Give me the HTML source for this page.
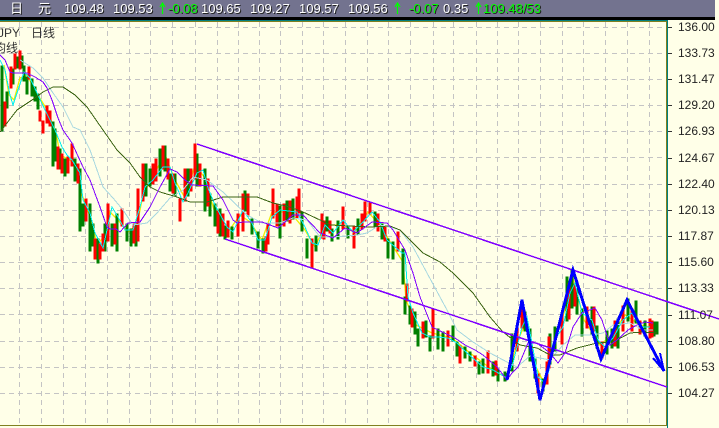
<!DOCTYPE html>
<html><head><meta charset="utf-8"><style>
html,body{margin:0;padding:0;width:719px;height:428px;overflow:hidden;background:#ffffe8}
#w{position:relative;width:719px;height:428px;overflow:hidden;font-family:"Liberation Sans","Noto Sans CJK SC",sans-serif}
svg{position:absolute;left:0;top:0}
.h,.a,.t{position:absolute;white-space:nowrap}
.h{top:1px;font-size:13px;line-height:16px;color:#fff;text-shadow:1px 1px 0 #222}
.g{color:#00ff00}
.a{left:678px;font-size:12px;line-height:14px;color:#222}
.t{font-size:12px;line-height:14px;color:#333}
</style></head><body><div id="w">
<svg width="719" height="428" viewBox="0 0 719 428">
<rect x="0" y="0" width="719" height="428" fill="#ffffe8"/>
<rect x="0" y="0" width="715" height="17" fill="#73738f"/>
<rect x="0" y="17" width="715" height="3" fill="#000"/>
<rect x="0" y="20" width="668" height="1" fill="#008080"/>
<rect x="0" y="21" width="667" height="1" fill="#808020"/>
<path d="M19.5 22V425M41.5 22V425M63.5 22V425M85.5 22V425M107.5 22V425M129.5 22V425M150.5 22V425M172.5 22V425M195.5 22V425M217.5 22V425M238.5 22V425M259.5 22V425M280.5 22V425M302.5 22V425M323.5 22V425M345.5 22V425M367.5 22V425M388.5 22V425M410.5 22V425M433.5 22V425M453.5 22V425M476.5 22V425M497.5 22V425M518.5 22V425M540.5 22V425M562.5 22V425M583.5 22V425M605.5 22V425M627.5 22V425M649.5 22V425" stroke="#c4c4c4" stroke-width="1" stroke-dasharray="5 4" fill="none"/>
<path d="M0 27.5H666M0 53.5H666M0 79.5H666M0 105.5H666M0 131.5H666M0 157.5H666M0 184.5H666M0 210.5H666M0 236.5H666M0 262.5H666M0 288.5H666M0 314.5H666M0 341.5H666M0 367.5H666M0 393.5H666" stroke="#c4c4c4" stroke-width="1" stroke-dasharray="5 4" fill="none"/>
<path d="M668 27.5H672M668 53.5H672M668 79.5H672M668 105.5H672M668 131.5H672M668 158.5H672M668 184.5H672M668 210.5H672M668 236.5H672M668 262.5H672M668 288.5H672M668 315.5H672M668 341.5H672M668 367.5H672M668 393.5H672" stroke="#333" stroke-width="1" fill="none"/>
<path d="M0 425.5H666" stroke="#808020" stroke-width="1"/>
<path d="M666.5 22V426" stroke="#808020" stroke-width="1"/>
<path d="M667.5 21V428" stroke="#008080" stroke-width="1"/>
<polyline fill="none" stroke="#eeee00" stroke-width="1.3" points="4,65 9,95 14,100 20,78 27,75 36,92 46,108 56,132 60,155 70,160 78,170 82,195 92,222 97,245 105,235 110,212 118,220 128,232 137,225 143,195 155,172 165,155 175,180 185,198 195,165 205,178 214,210 228,232 240,215 250,222 262,240 272,212 290,212 305,230 315,247 325,225 340,225 354,232 368,212 380,225 392,245 403,262 406,300 416,325 432,333 452,338 470,353 490,368 507,378 518,340 527,320 535,365 545,385 553,345 565,310 573,278 584,320 600,345 612,335 625,315 640,325 655,328"/>
<g shape-rendering="crispEdges" stroke-width="3" stroke-linecap="square" fill="none">
<path stroke="#008000" d="M2 67V130M7 93V107M13 70V83M17 58V67M22 57V67M24 67V80M27 78V93M32 80V95M35 88V100M38 95V108M53 123V165M55 130V160M60 150V168M65 160V175M75 160V180M80 170V230M83 205V225M90 205V250M93 225V245M98 240V262M105 225V250M112 225V245M117 215V250M127 225V240M131 230V245M136 225V245M146 165V195M150 170V185M160 150V175M165 147V170M170 175V190M175 175V195M188 170V195M197 155V185M205 170V210M210 195V215M215 205V225M220 210V235M225 227V238M232 228V238M245 192V210M252 220V233M258 233V247M263 240V252M280 207V237M287 202V220M293 200V218M302 213V230M307 240V257M316 237V250M327 218V230M332 230V240M338 222V238M348 227V237M358 220V233M375 213V225M382 225V238M388 240V257M393 243V258M403 250V283M405 298V313M410 307V323M415 313V333M418 330V345M426 322V336M430 337V350M438 330V348M443 333V350M453 327V340M457 343V355M465 348V357M470 353V360M479 363V373M483 360V372M493 363V375M498 370V380M505 373V380M512 335V370M525 313V330M530 330V360M535 360V377M543 380V390M550 335V363M555 328V350M567 278V320M572 270V307M577 290V313M582 310V335M592 308V333M597 327V347M607 332V353M612 330V347M618 320V347M628 300V320M636 302V322M645 322V335M654 323V335M657 323V333"/>
<path stroke="#ff0000" d="M5 103V125M11 68V87M15 55V68M20 52V68M29 68V78M40 112V120M43 122V132M47 107V122M50 112V125M58 148V168M62 155V172M68 158V172M72 145V165M78 165V182M86 200V220M95 240V258M100 245V258M103 235V250M108 205V240M115 225V243M122 210V225M134 225V242M138 190V240M143 165V200M153 165V183M156 160V180M163 147V168M168 160V178M173 175V192M180 200V220M185 170V200M191 170V190M195 145V178M200 165V185M208 180V205M218 212V232M223 215V235M228 222V236M238 215V235M243 195V230M248 195V215M266 238V250M268 225V243M273 190V217M277 205V225M284 205V225M290 202V222M297 198V217M299 190V212M312 240V267M322 215V237M324 222V238M330 222V232M343 208V228M354 228V247M362 215V228M365 203V220M370 203V213M378 215V230M385 228V240M398 233V250M407 285V300M412 310V326M423 323V337M433 310V337M448 332V345M460 347V362M475 357V365M488 352V372M496 362V374M517 327V350M522 302V327M538 375V392M547 363V383M549 338V367M562 315V343M569 285V318M575 285V305M587 308V327M594 308V330M602 343V357M615 322V345M623 307V330M632 310V330M640 322V333M650 320V337M652 322V336"/>
</g>
<g fill="none" shape-rendering="crispEdges">
<polyline stroke="#00f0f0" stroke-width="1" points="0,60 5,70 10,95 13,105 18,90 24,72 30,78 38,95 45,110 55,130 62,147 67,155 72,160 80,173 83,200 90,213 95,233 103,248 107,230 112,207 118,217 125,230 133,230 140,207 145,187 153,180 163,167 170,167 175,183 183,202 188,193 197,173 203,170 208,188 215,205 227,227 233,232 243,210 252,223 258,240 265,240 272,217 280,210 297,212 305,227 312,243 318,245 325,225 333,233 343,220 353,232 362,223 372,212 380,222 387,240 395,247 402,253 405,253 408,297 413,313 422,333 430,337 438,337 448,338 457,343 467,353 483,367 493,370 507,378 513,363 522,327 527,317 532,343 538,377 545,383 549,370 553,343 563,327 570,293 575,283 582,313 592,320 598,340 605,347 613,338 623,320 632,313 640,327 650,327"/>
<polyline stroke="#a8d8e0" stroke-width="1" points="20,60 33,68 43,78 53,93 63,107 73,127 80,130 90,150 103,187 113,198 123,210 133,225 147,223 157,213 170,198 183,190 193,177 207,180 223,192 247,215 262,223 280,223 293,218 307,220 320,237 333,237 357,235 367,233 380,225 393,228 400,230 413,247 427,273 447,310 457,330 473,342 490,353 507,362 517,367 530,356 540,358 550,360 563,345 575,335 592,335 603,333 613,325 630,323 643,330 653,330"/>
<polyline stroke="#3c6414" stroke-width="1" points="0,132 17,110 35,98 43,92 53,87 63,87 75,95 87,107 103,130 117,150 130,163 140,177 150,187 160,192 177,197 190,202 207,202 223,197 240,197 257,197 273,203 290,207 303,212 320,220 330,225 350,226 370,227 390,226 400,230 423,253 440,262 453,273 473,293 490,317 503,332 520,345 537,348 550,355 560,355 577,348 597,343 613,342 630,333 643,332 657,333"/>
<polyline stroke="#8000ff" stroke-width="1" points="0,55 5,60 10,72 13,73 27,73 35,77 43,82 47,88 52,100 58,118 63,130 72,143 83,167 90,180 100,207 107,227 110,229 116,229 120,232 128,223 140,222 150,207 160,187 170,169 177,172 185,180 192,185 213,186 223,200 233,220 237,223 243,222 262,222 278,228 293,215 303,215 320,233 333,238 345,228 357,233 372,222 387,223 393,230 405,250 413,273 420,297 432,327 438,330 455,338 465,345 475,350 483,355 497,367 507,380 512,373 518,367 528,343 537,343 550,353 558,363 565,353 573,327 582,313 595,308 602,320 610,345 617,340 628,330 637,325 645,322 653,323"/>
<path d="M197 144L719 319M225 239L667 387" stroke="#8000ff" stroke-width="1.5"/>
<polyline stroke="#0000ff" stroke-width="3" points="507,380 522,300 540,400 573,270 601,359 627,300 664,371"/>
<path d="M653 358L664 371L660 353" stroke="#0000ff" stroke-width="2"/>
</g>
<path d="M162.5 14V4M160 7L162.5 3L165 7M397.5 14V4M395 7L397.5 3L400 7M478.5 14V4M476 7L478.5 3L481 7" stroke="#00ff00" stroke-width="1.2" fill="none"/>
</svg>
<span class="h" style="left:10px">日</span>
<span class="h" style="left:38px">元</span>
<span class="h" style="left:64px">109.48</span>
<span class="h" style="left:113px">109.53</span>
<span class="h g" style="left:168px">-0.08</span>
<span class="h" style="left:201px">109.65</span>
<span class="h" style="left:250px">109.27</span>
<span class="h" style="left:299px">109.57</span>
<span class="h" style="left:348px">109.56</span>
<span class="h g" style="left:409px">-0.07</span>
<span class="h" style="left:443px">0.35</span>
<span class="h g" style="left:483px">109.48/53</span>
<span class="t" style="left:-2px;top:26px">JPY</span>
<span class="t" style="left:31px;top:26px">日线</span>
<span class="t" style="left:-6px;top:41px">均线</span>
<span class="a" style="top:20px">136.00</span>
<span class="a" style="top:46px">133.73</span>
<span class="a" style="top:72px">131.47</span>
<span class="a" style="top:98px">129.20</span>
<span class="a" style="top:124px">126.93</span>
<span class="a" style="top:151px">124.67</span>
<span class="a" style="top:177px">122.40</span>
<span class="a" style="top:203px">120.13</span>
<span class="a" style="top:229px">117.87</span>
<span class="a" style="top:255px">115.60</span>
<span class="a" style="top:281px">113.33</span>
<span class="a" style="top:308px">111.07</span>
<span class="a" style="top:334px">108.80</span>
<span class="a" style="top:360px">106.53</span>
<span class="a" style="top:386px">104.27</span>
</div></body></html>
